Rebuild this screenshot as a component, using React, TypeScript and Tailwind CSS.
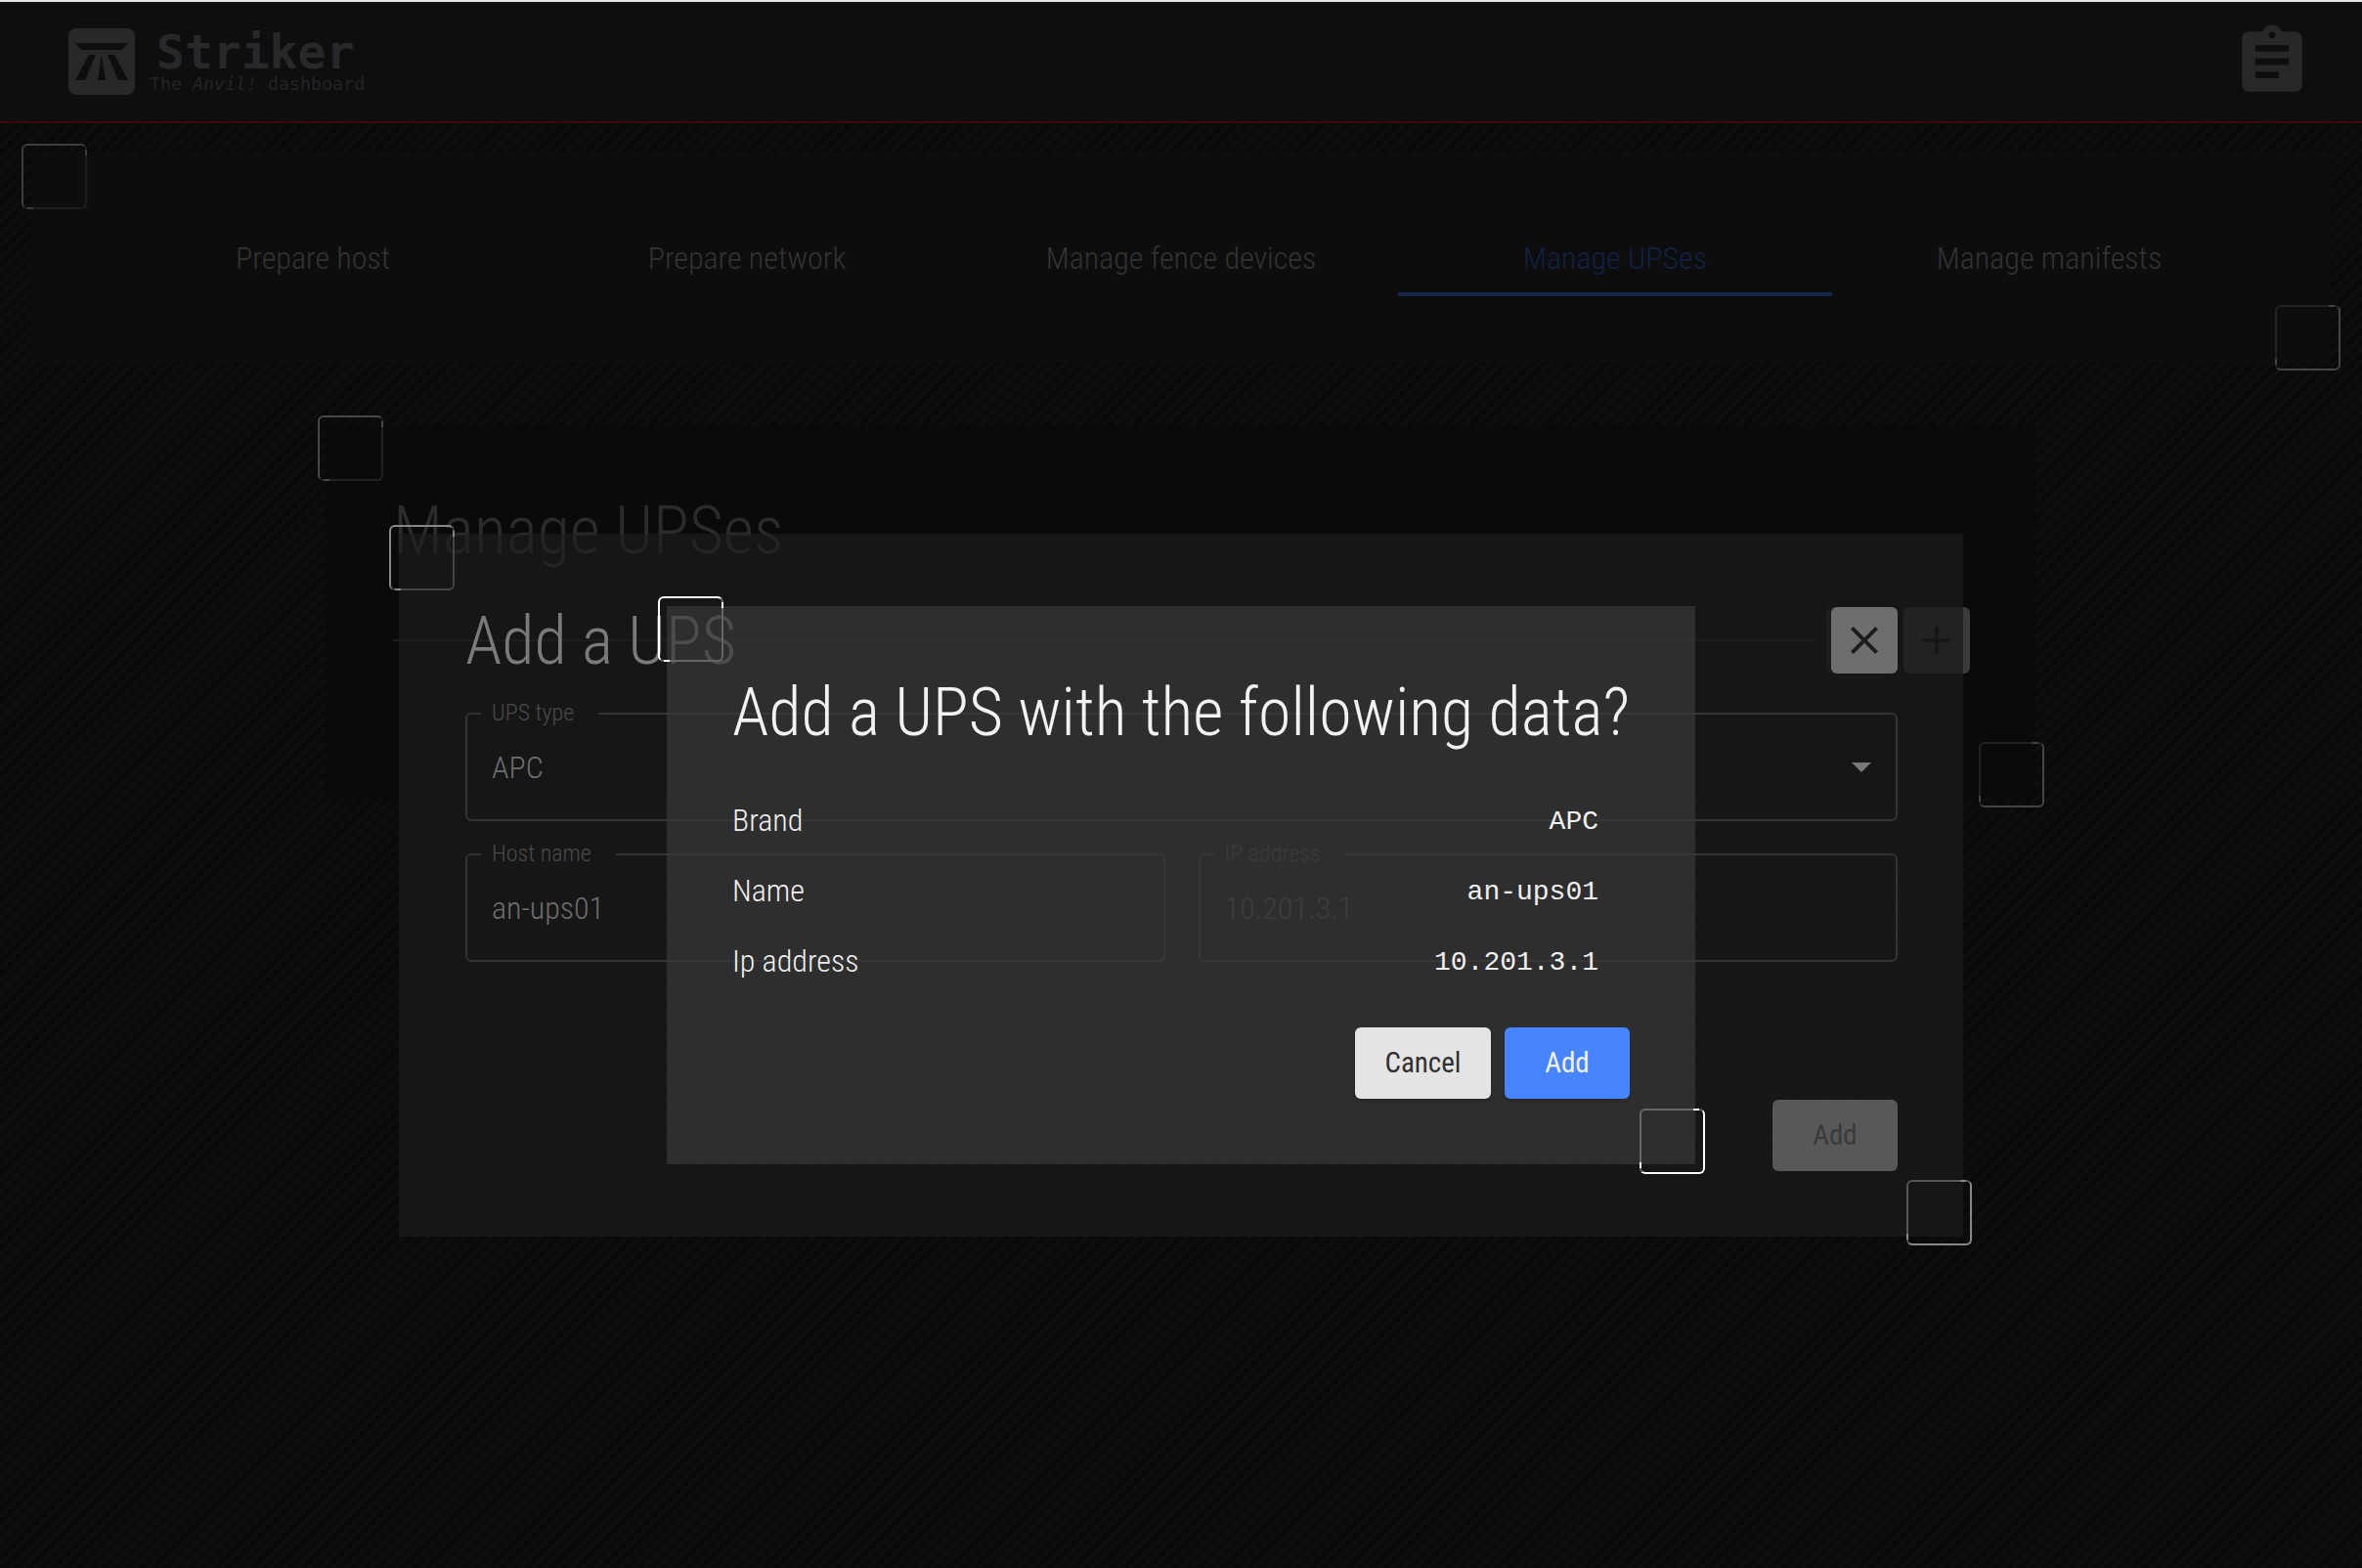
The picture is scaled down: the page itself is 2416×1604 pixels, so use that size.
const cond = "font-['Roboto_Condensed','Roboto',sans-serif] [font-stretch:75%]";

const tabs = ["Prepare host", "Prepare network", "Manage fence devices", "Manage UPSes", "Manage manifests"];

// decorative squares; "tl" has its bright edges top and left, "br" bottom and right
const squares = [
  { pos: "left-[22px] top-[147px]", edges: "border-t-[#3d3d3d] border-l-[#3d3d3d] border-r-[#1e1e1e] border-b-[#1e1e1e]", tick: "bg-[#3d3d3d]", kind: "tl" },
  { pos: "left-[2327px] top-[312px]", edges: "border-t-[#222222] border-l-[#222222] border-r-[#444444] border-b-[#444444]", tick: "bg-[#444444]", kind: "br" },
  { pos: "left-[325px] top-[425px]", edges: "border-t-[#484848] border-l-[#484848] border-r-[#222222] border-b-[#222222]", tick: "bg-[#484848]", kind: "tl" },
  { pos: "left-[398px] top-[537px]", edges: "border-t-[#888888] border-l-[#888888] border-r-[#444444] border-b-[#444444]", tick: "bg-[#888888]", kind: "tl" },
  { pos: "left-[673px] top-[610px]", edges: "border-t-white border-l-white border-r-[#666666] border-b-[#666666]", tick: "bg-white", kind: "tl" },
  { pos: "left-[2024px] top-[759px]", edges: "border-t-[#222222] border-l-[#222222] border-r-[#444444] border-b-[#444444]", tick: "bg-[#444444]", kind: "br" },
  { pos: "left-[1677px] top-[1134px]", edges: "border-t-[#666666] border-l-[#666666] border-r-white border-b-white", tick: "bg-white", kind: "br" },
  { pos: "left-[1950px] top-[1207px]", edges: "border-t-[#555555] border-l-[#555555] border-r-[#888888] border-b-[#888888]", tick: "bg-[#888888]", kind: "br" },
];

function Field({ label, value, disabled, caret }: { label: string; value: string; disabled?: boolean; caret?: boolean }) {
  return (
    <div className="relative flex h-[111px] flex-1 items-center rounded-[6px] border-2 border-[#333333] px-[25px]">
      <span className={`absolute -top-[16px] left-[14px] bg-[#161616] pl-[11px] pr-[25px] text-[24px] leading-[28px] font-light ${disabled ? "text-[#404040]" : "text-[#4a4a4a]"}`}>
        {label}
      </span>
      <span className={`text-[32px] font-light ${disabled ? "text-[#484848]" : "text-[#6e6e6e]"}`}>{value}</span>
      {caret && <span className="ml-auto h-0 w-0 border-x-[10px] border-t-[10px] border-x-transparent border-t-[#777777]" />}
    </div>
  );
}

function Row({ label, value }: { label: string; value: string }) {
  return (
    <div className="flex h-[72px] items-center justify-between pr-[32px]">
      <span className="pb-[2px] text-[32px] font-light text-[#f0f0f0]">{label}</span>
      <span className="pt-[2px] font-['Liberation_Mono',monospace] text-[28px] [font-stretch:100%] text-[#f0f0f0]">{value}</span>
    </div>
  );
}

export default function App() {
  return (
    <div className={`relative h-[1604px] w-full overflow-hidden bg-[#0a0a0a] bg-[repeating-linear-gradient(135deg,#0a0a0a_0px,#0a0a0a_6px,#0e0e0e_6px,#0e0e0e_9px)] ${cond}`}>
      <div className="h-[2px] bg-[#e4e4e4]" />
      <header className="flex h-[124px] items-center justify-between border-b-2 border-[#3a0808] bg-[#0e0e0e] pl-[70px] pr-[51px]">
        <div className="flex items-center gap-[15px]">
          <svg viewBox="0 0 68 68" className="h-[68px] w-[68px]">
            <rect width="68" height="68" rx="8" fill="#26282a" />
            <path d="M7 15h54l-6 7H13z M21 27h7L17 53H7z M33.500 27 38 53h-8z M40 27h7l14 26H51z" fill="#0e0e0e" />
          </svg>
          <div className="font-['DejaVu_Sans_Mono',monospace] [font-stretch:100%]">
            <div className="pl-[7px] text-[48px] font-bold leading-[46px] text-[#26282a]">Striker</div>
            <div className="text-[18.300px] leading-[20px] text-[#222426]">
              The <em>Anvil!</em> dashboard
            </div>
          </div>
        </div>
        <svg viewBox="0 0 24 24" className="h-[82px] w-[82px]" fill="#26282a">
          <path d="M19 3h-4.180C14.400 1.840 13.300 1 12 1c-1.300 0-2.400.840-2.820 2H5c-1.100 0-2 .900-2 2v14c0 1.100.900 2 2 2h14c1.100 0 2-.900 2-2V5c0-1.100-.900-2-2-2zm-7 0c.550 0 1 .450 1 1s-.450 1-1 1-1-.450-1-1 .450-1 1-1zm2 14H7v-2h7v2zm3-4H7v-2h10v2zm0-4H7V7h10v2z" />
        </svg>
      </header>

      <main>
        <section className="mx-[32px] mt-[30px] h-[214px] bg-[#0d0d0d] px-[66px] pt-[69px]">
          <nav className="flex">
            {tabs.map((t, i) => (
              <div key={t} className={`flex h-[78px] flex-1 items-center justify-center border-b-4 pt-[4px] text-[32px] font-light ${i === 3 ? "border-[#14264d] text-[#112145]" : "border-transparent text-[#333333]"}`}>
                {t}
              </div>
            ))}
          </nav>
        </section>
        <section className="ml-[333px] mr-[334px] mt-[66px] h-[381px] bg-[#0a0a0a] pl-[69px] pr-[68px] pt-[67px]">
          <h2 className="text-[68px] font-light leading-[80px] text-[#2b2b2b]">Manage UPSes</h2>
          <div className="mt-[38px] flex h-[68px] items-center">
            <div className="h-[2px] flex-1 bg-[#1c1c1c]" />
            <span className="ml-[12px] mr-[79px] h-[68px] w-[67px] rounded-[6px] bg-[#1c1c1c]" />
          </div>
        </section>
      </main>

      <div className="absolute left-[408px] top-[546px] flex h-[719px] w-[1600px] flex-col bg-[#1e1e1e]/60 pl-[68px] pr-[67px] pt-[70px]">
        <div className="flex items-start justify-between">
          <h2 className="text-[68px] font-light leading-[80px] text-[#7a7a7a]">Add a UPS</h2>
          <div className="-mr-[74px] mt-[5px] flex gap-[6px]">
            <span className="flex h-[68px] w-[68px] items-center justify-center rounded-[6px] bg-[#6e6e6e]">
              <svg viewBox="0 0 24 24" className="h-[48px] w-[48px]" fill="#1c1c1c">
                <path d="M19 6.410 17.590 5 12 10.590 6.410 5 5 6.410 10.590 12 5 17.590 6.410 19 12 13.410 17.590 19 19 17.590 13.410 12z" />
              </svg>
            </span>
            <span className="flex h-[68px] w-[68px] items-center justify-center rounded-[6px] bg-[linear-gradient(90deg,#222222_61px,#3a3a3a_61px)]">
              <svg viewBox="0 0 24 24" className="h-[48px] w-[48px]" fill="#161616">
                <path d="M19 13h-6v6h-2v-6H5v-2h6V5h2v6h6v2z" />
              </svg>
            </span>
          </div>
        </div>
        <div className="mt-[33px] flex">
          <Field label="UPS type" value="APC" caret />
        </div>
        <div className="mt-[33px] flex gap-[34px]">
          <Field label="Host name" value="an-ups01" />
          <Field label="IP address" value="10.201.3.1" disabled />
        </div>
        <div className="mt-[141px] flex justify-end">
          <span className="flex h-[73px] w-[128px] items-center justify-center rounded-[6px] bg-[#585858] text-[29px] text-[#3a3a3a]">Add</span>
        </div>
      </div>

      <div className="absolute left-[682px] top-[620px] flex h-[571px] w-[1052px] flex-col bg-[#393939]/70 pl-[67px] pr-[67px] pt-[69px]">
        <h1 className="whitespace-nowrap text-[68px] font-light leading-[80px] text-[#f2f2f2]">Add a UPS with the following data?</h1>
        <div className="mt-[35px]">
          <Row label="Brand" value="APC" />
          <Row label="Name" value="an-ups01" />
          <Row label="Ip address" value="10.201.3.1" />
        </div>
        <div className="mt-[31px] flex justify-end gap-[14px]">
          <button className="h-[73px] w-[139px] rounded-[6px] bg-[#e4e4e4] text-[29px] text-[#2f2f2f] shadow-md">Cancel</button>
          <button className="h-[73px] w-[128px] rounded-[6px] bg-[#4785ff] text-[29px] text-[#f2f2f2] shadow-md">Add</button>
        </div>
      </div>

      {squares.map((s) => (
        <div key={s.pos} className={`absolute h-[67px] w-[67px] rounded-[6px] border-2 ${s.pos} ${s.edges}`}>
          {s.kind === "tl" ? (
            <>
              <span className={`absolute -bottom-[2px] left-[4px] h-[2px] w-[6px] ${s.tick}`} />
              <span className={`absolute -right-[2px] top-[4px] h-[6px] w-[2px] ${s.tick}`} />
            </>
          ) : (
            <>
              <span className={`absolute -top-[2px] right-[4px] h-[2px] w-[6px] ${s.tick}`} />
              <span className={`absolute -left-[2px] bottom-[4px] h-[6px] w-[2px] ${s.tick}`} />
            </>
          )}
        </div>
      ))}
    </div>
  );
}
